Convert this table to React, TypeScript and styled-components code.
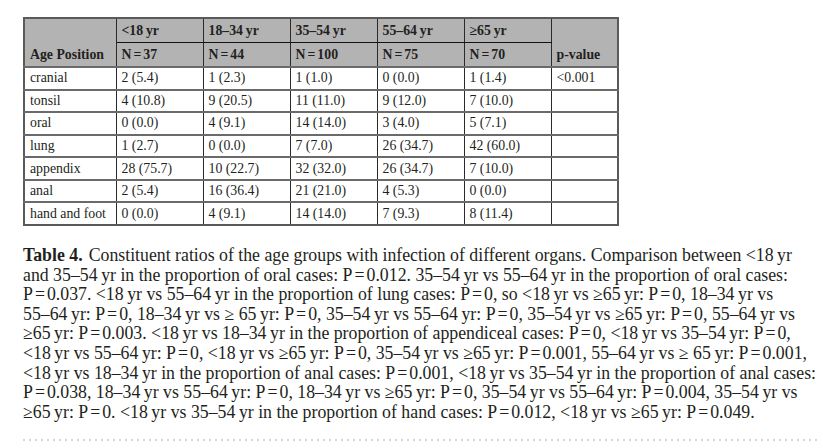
import React from "react";
import styled, { createGlobalStyle } from "styled-components";

const Global = createGlobalStyle`
  html, body { margin: 0; padding: 0; background: #ffffff; }
  body { font-family: "Liberation Serif", "Times New Roman", serif; color: #231f20; }
`;

const Page = styled.div`
  width: 823px;
  height: 448px;
  box-sizing: border-box;
  padding: 17px 0 0 23px;
  display: flex;
  flex-direction: column;
`;

const Table = styled.table`
  border-collapse: collapse;
  table-layout: fixed;
  width: 594px;
  font-size: 13.8px;
  border: 2px solid #5a5a5a;
`;

const HeadCell = styled.th<{ $bottom?: boolean; $rule?: boolean }>`
  background: #b3b3b3;
  font-weight: bold;
  text-align: left;
  padding: 0 5px;
  height: ${(p) => (p.$bottom ? "44px" : "21px")};
  vertical-align: ${(p) => (p.$bottom ? "bottom" : "middle")};
  padding-bottom: ${(p) => (p.$bottom ? "3px" : "0")};
  border-left: 1px solid #2a2a2a;
  border-right: 1px solid #2a2a2a;
  border-bottom: 1px solid ${(p) => (p.$rule ? "#111" : "#555")};
  white-space: nowrap;
`;

const Row = styled.tr`
  border-top: 2px solid #6a6a6a;
`;

const Cell = styled.td`
  padding: 0 5px;
  height: 20px;
  border-left: 1px solid #2a2a2a;
  border-right: 1px solid #2a2a2a;
  white-space: nowrap;
  vertical-align: middle;
`;

const Caption = styled.div`
  margin-top: 24px;
  font-size: 17.8px;
  line-height: 19.6px;
  color: #231f20;
`;

const Line = styled.div`
  white-space: nowrap;
`;

const Label = styled.b`
  font-weight: bold;
  margin-right: 6px;
`;

const Eq = styled.span<{ $gap?: number }>`
  margin: 0 ${(p) => p.$gap ?? 2}px;
`;

const Dots = styled.div`
  margin-top: 17px;
  height: 2px;
  width: 798px;
  background-image: linear-gradient(to right, #cdd7e2 2px, transparent 2px);
  background-size: 6px 2px;
`;

const t = "\u2009";

const groups = [
  { label: `<18${t}yr`, n: "37" },
  { label: `18–34${t}yr`, n: "44" },
  { label: `35–54${t}yr`, n: "100" },
  { label: `55–64${t}yr`, n: "75" },
  { label: `≥65${t}yr`, n: "70" },
];

const rows: [string, string[], string][] = [
  ["cranial", ["2 (5.4)", "1 (2.3)", "1 (1.0)", "0 (0.0)", "1 (1.4)"], "<0.001"],
  ["tonsil", ["4 (10.8)", "9 (20.5)", "11 (11.0)", "9 (12.0)", "7 (10.0)"], ""],
  ["oral", ["0 (0.0)", "4 (9.1)", "14 (14.0)", "3 (4.0)", "5 (7.1)"], ""],
  ["lung", ["1 (2.7)", "0 (0.0)", "7 (7.0)", "26 (34.7)", "42 (60.0)"], ""],
  ["appendix", ["28 (75.7)", "10 (22.7)", "32 (32.0)", "26 (34.7)", "7 (10.0)"], ""],
  ["anal", ["2 (5.4)", "16 (36.4)", "21 (21.0)", "4 (5.3)", "0 (0.0)"], ""],
  ["hand and foot", ["0 (0.0)", "4 (9.1)", "14 (14.0)", "7 (9.3)", "8 (11.4)"], ""],
];

const render = (s: string) => {
  const parts = s.replace(/ yr/g, `${t}yr`).split(" = ");
  return parts.map((p, i) => (
    <React.Fragment key={i}>
      {i > 0 && <Eq>=</Eq>}
      {p}
    </React.Fragment>
  ));
};

const lines = [
  "Constituent ratios of the age groups with infection of different organs. Comparison between <18 yr",
  "and 35–54 yr in the proportion of oral cases: P = 0.012. 35–54 yr vs 55–64 yr in the proportion of oral cases:",
  "P = 0.037. <18 yr vs 55–64 yr in the proportion of lung cases: P = 0, so <18 yr vs ≥65 yr: P = 0, 18–34 yr vs",
  "55–64 yr: P = 0, 18–34 yr vs ≥ 65 yr: P = 0, 35–54 yr vs 55–64 yr: P = 0, 35–54 yr vs ≥65 yr: P = 0, 55–64 yr vs",
  "≥65 yr: P = 0.003. <18 yr vs 18–34 yr in the proportion of appendiceal cases: P = 0, <18 yr vs 35–54 yr: P = 0,",
  "<18 yr vs 55–64 yr: P = 0, <18 yr vs ≥65 yr: P = 0, 35–54 yr vs ≥65 yr: P = 0.001, 55–64 yr vs ≥ 65 yr: P = 0.001,",
  "<18 yr vs 18–34 yr in the proportion of anal cases: P = 0.001, <18 yr vs 35–54 yr in the proportion of anal cases:",
  "P = 0.038, 18–34 yr vs 55–64 yr: P = 0, 18–34 yr vs ≥65 yr: P = 0, 35–54 yr vs 55–64 yr: P = 0.004, 35–54 yr vs",
  "≥65 yr: P = 0. <18 yr vs 35–54 yr in the proportion of hand cases: P = 0.012, <18 yr vs ≥65 yr: P = 0.049.",
];

export default function App() {
  return (
    <>
      <Global />
      <Page>
        <Table>
          <colgroup>
            <col style={{ width: 92 }} />
            <col style={{ width: 87 }} />
            <col style={{ width: 87 }} />
            <col style={{ width: 87 }} />
            <col style={{ width: 87 }} />
            <col style={{ width: 87 }} />
            <col style={{ width: 67 }} />
          </colgroup>
          <thead>
            <tr>
              <HeadCell rowSpan={2} $bottom>
                Age Position
              </HeadCell>
              {groups.map((g) => (
                <HeadCell key={g.label} $rule>
                  {g.label}
                </HeadCell>
              ))}
              <HeadCell rowSpan={2} $bottom>
                p-value
              </HeadCell>
            </tr>
            <tr>
              {groups.map((g) => (
                <HeadCell key={g.n}>
                  N<Eq>=</Eq>
                  {g.n}
                </HeadCell>
              ))}
            </tr>
          </thead>
          <tbody>
            {rows.map(([name, vals, p]) => (
              <Row key={name}>
                <Cell>{name}</Cell>
                {vals.map((v, i) => (
                  <Cell key={i}>{v}</Cell>
                ))}
                <Cell>{p}</Cell>
              </Row>
            ))}
          </tbody>
        </Table>
        <Caption>
          {lines.map((l, i) => (
            <Line key={i}>
              {i === 0 && <Label>Table 4.</Label>}
              {render(l)}
            </Line>
          ))}
        </Caption>
        <Dots />
      </Page>
    </>
  );
}
